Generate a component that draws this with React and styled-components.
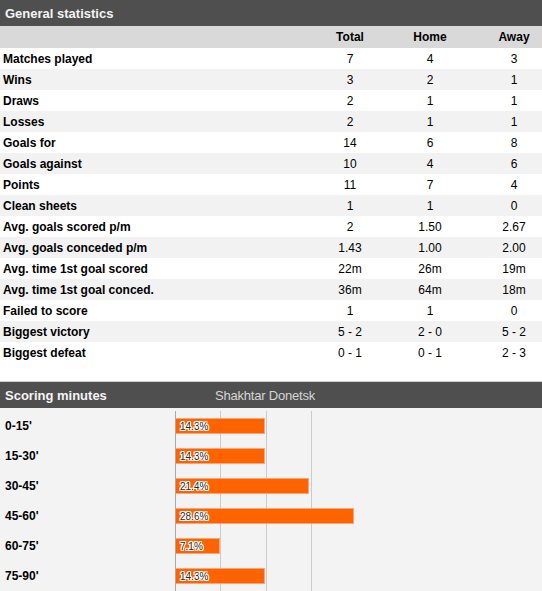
import React from "react";
import styled, { createGlobalStyle } from "styled-components";

const Global = createGlobalStyle`
  html, body { margin: 0; padding: 0; background: #fff; }
  body { font-family: "Liberation Sans", Arial, sans-serif; color: #000; }
`;

const Page = styled.div`
  width: 542px;
  display: flex;
  flex-direction: column;
`;

const SectionHeader = styled.div`
  background: #4f4f4f;
  display: flex;
  align-items: center;
  padding-left: 5px;
  box-sizing: border-box;
  border-top: ${(p) => (p.$bordered ? "1px solid #cfcfcf" : "none")};
  height: ${(p) => (p.$bordered ? "27px" : "26px")};
`;

const Title = styled.span`
  font-size: 13px;
  font-weight: bold;
  color: #f4f4f4;
  width: ${(p) => p.$w || "auto"};
`;

const Team = styled.span`
  font-size: 13px;
  color: #d6d6d6;
  letter-spacing: -0.2px;
`;

const Row = styled.div`
  display: grid;
  grid-template-columns: 1fr 80px 96px 56px;
  height: ${(p) => (p.$head ? "22px" : "21px")};
  align-items: center;
  background: ${(p) => p.$bg};
  font-size: 12px;
`;

const Label = styled.div`
  padding-left: 3px;
  font-weight: bold;
`;

const Cell = styled.div`
  text-align: center;
  font-weight: ${(p) => (p.$bold ? "bold" : "normal")};
  padding-right: ${(p) => p.$pr || 0}px;
`;

const Spacer = styled.div`
  height: 18px;
`;

const Chart = styled.div`
  background: #f3f3f3;
  padding-top: 3px;
  display: flex;
  flex-direction: column;
`;

const ChartRow = styled.div`
  display: grid;
  grid-template-columns: 175px 1fr;
  height: 30px;
`;

const RowLabel = styled.div`
  font-size: 12px;
  font-weight: bold;
  padding-left: 5px;
  padding-top: 7px;
  line-height: 16px;
`;

const Plot = styled.div`
  background-image: linear-gradient(to right, #a9a9a9 0 1px, transparent 1px),
    repeating-linear-gradient(
      to right,
      transparent 0 44.8px,
      #cbcbcb 44.8px 45.8px
    );
  background-size: 1px 100%, 180px 100%;
  background-repeat: no-repeat;
  padding-top: 7px;
  padding-left: 1px;
`;

const Bar = styled.div`
  height: 16px;
  box-sizing: border-box;
  background: #fd6400;
  border: 1px solid #f9a47a;
  border-left: none;
  display: flex;
  align-items: center;
  padding-left: 4px;
  font-family: "Liberation Sans", Arial, sans-serif;
  font-size: 10px;
  color: #2a2a2a;
  text-shadow: 1px 0 0 #fff, -1px 0 0 #fff, 0 1px 0 #fff, 0 -1px 0 #fff,
    1px 1px 0 #fff, -1px -1px 0 #fff, 1px -1px 0 #fff, -1px 1px 0 #fff;
  white-space: nowrap;
`;

const stats = [
  ["Matches played", "7", "4", "3"],
  ["Wins", "3", "2", "1"],
  ["Draws", "2", "1", "1"],
  ["Losses", "2", "1", "1"],
  ["Goals for", "14", "6", "8"],
  ["Goals against", "10", "4", "6"],
  ["Points", "11", "7", "4"],
  ["Clean sheets", "1", "1", "0"],
  ["Avg. goals scored p/m", "2", "1.50", "2.67"],
  ["Avg. goals conceded p/m", "1.43", "1.00", "2.00"],
  ["Avg. time 1st goal scored", "22m", "26m", "19m"],
  ["Avg. time 1st goal conced.", "36m", "64m", "18m"],
  ["Failed to score", "1", "1", "0"],
  ["Biggest victory", "5 - 2", "2 - 0", "5 - 2"],
  ["Biggest defeat", "0 - 1", "0 - 1", "2 - 3"],
];

const minutes = [
  ["0-15'", 14.3],
  ["15-30'", 14.3],
  ["30-45'", 21.4],
  ["45-60'", 28.6],
  ["60-75'", 7.1],
  ["75-90'", 14.3],
];

export default function App() {
  return (
    <Page>
      <Global />
      <SectionHeader>
        <Title>General statistics</Title>
      </SectionHeader>
      <Row $head $bg="#d9d9d9">
        <Label />
        <Cell $bold>Total</Cell>
        <Cell $bold $pr={16}>Home</Cell>
        <Cell $bold>Away</Cell>
      </Row>
      {stats.map(([l, t, h, a], i) => (
        <Row key={l} $bg={i % 2 ? "#f2f2f2" : "#ffffff"}>
          <Label>{l}</Label>
          <Cell>{t}</Cell>
          <Cell $pr={16}>{h}</Cell>
          <Cell>{a}</Cell>
        </Row>
      ))}
      <Spacer />
      <SectionHeader $bordered>
        <Title $w="210px">Scoring minutes</Title>
        <Team>Shakhtar Donetsk</Team>
      </SectionHeader>
      <Chart>
        {minutes.map(([l, p]) => (
          <ChartRow key={l}>
            <RowLabel>{l}</RowLabel>
            <Plot>
              <Bar style={{ width: `${Math.round((p / 28.6) * 178)}px` }}>
                {p.toFixed(1)}%
              </Bar>
            </Plot>
          </ChartRow>
        ))}
      </Chart>
    </Page>
  );
}
